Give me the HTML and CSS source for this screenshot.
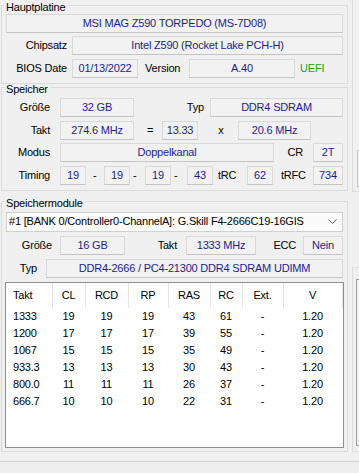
FILE: index.html
```html
<!DOCTYPE html>
<html lang="de">
<head>
<meta charset="utf-8">
<title>CPU-Z Speicher</title>
<link rel="stylesheet" href="styles.css">
</head>
<body>
<div class="window">
  <div class="top">
    <div class="main">
      <section class="group g1">
        <div class="ghead"><span class="gtitle">Hauptplatine</span></div>
        <div class="rows">
          <div class="row"><div class="field grow">MSI MAG Z590 TORPEDO (MS-7D08)</div></div>
          <div class="row r-gap3"><span class="lbl l61">Chipsatz</span><div class="field grow ml5">Intel Z590 (Rocket Lake PCH-H)</div></div>
          <div class="row r-gap4"><span class="lbl l61">BIOS Date</span><div class="field ml5 w66">01/13/2022</div><span class="lbl-l ver">Version</span><div class="field w106">A.40</div><span class="uefi">UEFI</span></div>
        </div>
      </section>

      <section class="group g2">
        <div class="ghead"><span class="gtitle">Speicher</span></div>
        <div class="rows">
          <div class="row"><span class="lbl l44">Größe</span><div class="field ml10 w74">32 GB</div><span class="lbl typ2">Typ</span><div class="field grow ml6">DDR4 SDRAM</div></div>
          <div class="row r-gap3"><span class="lbl l44">Takt</span><div class="field ml10 w74">274.6 MHz</div><span class="op eq">=</span><div class="field w36">13.33</div><span class="op mul">x</span><div class="field w73">20.6 MHz</div></div>
          <div class="row r-gap2"><span class="lbl l44">Modus</span><div class="field ml10 w214">Doppelkanal</div><span class="lbl cr">CR</span><div class="field grow ml10">2T</div></div>
          <div class="row r-gap3"><span class="lbl l44">Timing</span><div class="field ml10 w26">19</div><span class="dash d1">-</span><div class="field w26">19</div><span class="dash d2">-</span><div class="field w26">19</div><span class="dash d3">-</span><div class="field w26">43</div><span class="lbl-l trc">tRC</span><div class="field w26">62</div><span class="lbl-l trfc">tRFC</span><div class="field grow">734</div></div>
        </div>
      </section>

      <section class="group g3">
        <div class="ghead"><span class="gtitle">Speichermodule</span></div>
        <div class="rows">
          <div class="combo"><span class="combo-text">#1 [BANK 0/Controller0-ChannelA]: G.Skill F4-2666C19-16GIS</span>
            <svg class="chev" width="9" height="5" viewBox="0 0 9 5"><polyline points="0.5,0.5 4.5,4.5 8.5,0.5" fill="none" stroke="#5a5a5a" stroke-width="1"/></svg>
          </div>
          <div class="row r-gap4"><span class="lbl l46">Größe</span><div class="field ml8 w65">16 GB</div><span class="lbl takt3">Takt</span><div class="field ml9 w70">1333 MHz</div><span class="lbl ecc">ECC</span><div class="field grow ml7">Nein</div></div>
          <div class="row r-gap4"><span class="lbl l31">Typ</span><div class="field grow ml9">DDR4-2666 / PC4-21300 DDR4 SDRAM UDIMM</div></div>
          <div class="spd">
            <table>
              <colgroup><col class="c-takt"><col class="c-cl"><col class="c-rcd"><col class="c-rp"><col class="c-ras"><col class="c-rc"><col class="c-ext"><col class="c-v"></colgroup>
              <thead>
                <tr><th class="first">Takt</th><th>CL</th><th>RCD</th><th>RP</th><th>RAS</th><th>RC</th><th>Ext.</th><th>V</th></tr>
              </thead>
              <tbody>
                <tr><td class="first">1333</td><td>19</td><td>19</td><td>19</td><td>43</td><td>61</td><td>-</td><td>1.20</td></tr>
                <tr><td class="first">1200</td><td>17</td><td>17</td><td>17</td><td>39</td><td>55</td><td>-</td><td>1.20</td></tr>
                <tr><td class="first">1067</td><td>15</td><td>15</td><td>15</td><td>35</td><td>49</td><td>-</td><td>1.20</td></tr>
                <tr><td class="first">933.3</td><td>13</td><td>13</td><td>13</td><td>30</td><td>43</td><td>-</td><td>1.20</td></tr>
                <tr><td class="first">800.0</td><td>11</td><td>11</td><td>11</td><td>26</td><td>37</td><td>-</td><td>1.20</td></tr>
                <tr><td class="first">666.7</td><td>10</td><td>10</td><td>10</td><td>22</td><td>31</td><td>-</td><td>1.20</td></tr>
              </tbody>
            </table>
          </div>
        </div>
      </section>
    </div>
    <div class="side">
      <div class="sg1"><div class="sbox sb1"></div></div>
      <div class="sg2"><div class="sbox sb2"></div></div>
    </div>
  </div>
  <div class="footer"></div>
</div>
</body>
</html>
```

FILE: styles.css
```css
html, body {
  margin: 0;
  padding: 0;
}
body {
  background: #f0f0f0;
  font-family: "Liberation Sans", Arial, sans-serif;
  font-size: 11px;
  line-height: 13px;
  letter-spacing: -0.2px;
  color: #000;
  width: 359px;
  height: 473px;
  overflow: hidden;
}
.window {
  display: flex;
  flex-direction: column;
  height: 473px;
}
.top {
  display: flex;
}
.main {
  width: 347px;
  padding-left: 1px;
  display: flex;
  flex-direction: column;
}
.group {
  border: 1px solid #dcdcdc;
  border-top: 0;
}
.ghead {
  display: flex;
  align-items: flex-start;
  margin: 0 -1px;
}
.ghead::before {
  content: "";
  width: 3px;
  border-top: 1px solid #dcdcdc;
}
.ghead::after {
  content: "";
  flex: 1;
  border-top: 1px solid #dcdcdc;
}
.gtitle {
  margin-top: -4px;
  padding: 0 2px;
  white-space: nowrap;
}
.g1 { margin-top: 5px; }
.g2 { margin-top: 3px; }
.g3 { margin-top: 10px; }
.rows {
  display: flex;
  flex-direction: column;
  padding: 0 4px 0 4px;
}
.g1 .rows { padding-bottom: 5px; }
.g2 .rows { padding-top: 2px; padding-bottom: 5px; }
.g3 .rows { padding-top: 2px; padding-bottom: 3px; }
.row {
  display: flex;
  align-items: center;
  height: 19px;
}
.r-gap2 { margin-top: 3px; }
.r-gap3 { margin-top: 3px; }
.r-gap4 { margin-top: 4px; }
.g2 .row + .row { margin-top: 3.5px; }

.field {
  box-sizing: border-box;
  height: 19px;
  border: 1px solid #d9d9d9;
  border-bottom-color: #c4c4c4;
  background: #f2f2f2;
  color: #1c1c8e;
  display: flex;
  align-items: center;
  justify-content: center;
  white-space: nowrap;
  flex: none;
}
.grow { flex: 1; }
.lbl {
  flex: none;
  text-align: right;
  white-space: nowrap;
}
.lbl-l {
  flex: none;
  text-align: left;
  white-space: nowrap;
}
.l61 { width: 61px; }
.l44 { width: 44px; }
.l46 { width: 46px; }
.l31 { width: 31px; }
.ml5 { margin-left: 5px; }
.ml6 { margin-left: 6px; }
.ml7 { margin-left: 7px; }
.ml8 { margin-left: 8px; }
.ml9 { margin-left: 9px; }
.ml10 { margin-left: 10px; }
.w26 { width: 26px; }
.w36 { width: 36px; }
.w65 { width: 65px; }
.w66 { width: 66px; }
.w70 { width: 70px; }
.w73 { width: 73px; }
.w74 { width: 74px; }
.w106 { width: 106px; }
.w214 { width: 214px; }

.ver { margin-left: 7px; width: 44px; }
.uefi { margin-left: 5px; color: #22a022; }
.typ2 { width: 70px; }
.op { flex: none; text-align: center; }
.eq { width: 24px; padding-left: 4px; }
.mul { width: 34px; padding-left: 6px; }
.cr { width: 29px; }
.dash { flex: none; text-align: left; }
.d1 { width: 11px; padding-left: 7px; }
.d2 { width: 12px; padding-left: 3px; }
.d3 { width: 13px; padding-left: 3px; }
.trc { width: 29px; padding-left: 5px; }
.trfc { width: 32px; padding-left: 8px; }
.takt3 { width: 52px; }
.ecc { width: 40px; }

.combo {
  box-sizing: border-box;
  height: 20px;
  border: 1px solid #d0d0d0;
  background: #fbfbfb;
  display: flex;
  align-items: center;
  padding: 0 5px 0 2px;
}
.combo-text {
  flex: 1;
  white-space: nowrap;
  overflow: hidden;
}
.chev { flex: none; }

.spd {
  margin: 4px -1px 0 -1px;
  box-sizing: border-box;
  height: 166px;
  border: 1px solid #8f9090;
  background: #fff;
}
.spd table {
  border-collapse: collapse;
  table-layout: fixed;
  width: 336px;
}
.c-takt { width: 46px; }
.c-cl { width: 33px; }
.c-rcd { width: 43px; }
.c-rp { width: 40px; }
.c-ras { width: 42px; }
.c-rc { width: 32px; }
.c-ext { width: 41px; }
.c-v { width: 59px; }
.spd th {
  height: 25px;
  padding: 0;
  font-weight: normal;
  text-align: center;
  border-right: 1px solid #e5e5e5;
  box-sizing: border-box;
}
.spd td {
  height: 17px;
  padding: 0;
  text-align: center;
  white-space: nowrap;
}
.spd .first {
  text-align: left;
  padding-left: 7px;
}

.side {
  width: 7px;
  margin-left: 4px;
  display: flex;
  flex-direction: column;
}
.sg1 {
  height: 192px;
  box-sizing: border-box;
  border-left: 1px solid #dcdcdc;
  border-bottom: 1px solid #dcdcdc;
  padding-top: 150px;
}
.sg2 {
  margin-top: 75px;
  height: 185px;
  box-sizing: border-box;
  border-left: 1px solid #dcdcdc;
  border-top: 1px solid #dcdcdc;
  border-bottom: 1px solid #dcdcdc;
  padding-top: 11px;
}
.sbox {
  margin-left: 4px;
  box-sizing: border-box;
  border: 1px solid #c9c9c9;
  border-right: 0;
}
.sb1 { height: 37px; }
.sb2 { height: 167px; margin-left: 3px; border-color: #a0a0a0; }
.footer {
  margin-top: auto;
  height: 11px;
  border-top: 1px solid #d2d2d2;
  background: #eeeeee;
}
```
